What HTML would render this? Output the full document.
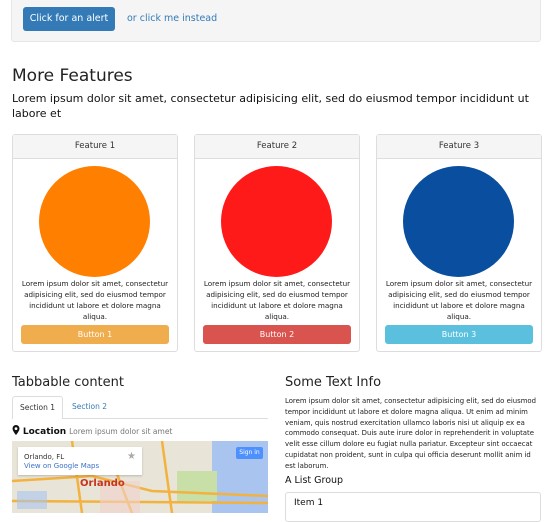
<!DOCTYPE html>
<html><head><style>
*{box-sizing:border-box;margin:0;padding:0}
body{width:556px;height:513px;overflow:hidden;background:#fff;font-family:"DejaVu Sans","Liberation Sans",sans-serif;color:#333;position:relative}
.a{position:absolute}
.jum{left:11px;top:-2px;width:530px;height:44px;background:#f5f5f5;border:1px solid #e6e6e6;border-radius:3px}
.btn{left:23px;top:7px;width:92px;height:24px;background:#337ab7;border-radius:3px;color:#fff;font-size:9.5px;text-align:center;line-height:24px}
.link{left:127px;top:7px;line-height:24px;font-size:9.5px;color:#337ab7}
h2{position:absolute;left:12px;top:66px;font-size:17px;font-weight:normal;color:#222}
.lead{left:12px;top:91px;width:530px;font-size:11px;line-height:15px;color:#111}
.panel{top:134px;width:166px;height:218px;border:1px solid #ddd;border-radius:3px}
.ph{height:24px;background:#f5f5f5;border-bottom:1px solid #ddd;font-size:8.5px;text-align:center;line-height:23px}
.circ{position:absolute;left:26px;top:31px;width:111px;height:111px;border-radius:50%}
.pt{position:absolute;left:6px;right:6px;top:143px;font-size:7.2px;line-height:11px;text-align:center;color:#222}
.pb{position:absolute;left:8px;right:8px;top:190px;height:19px;border-radius:3px;color:#fff;font-size:8px;text-align:center;line-height:19px}
h3{position:absolute;font-size:13px;font-weight:normal;color:#222}
</style></head><body>
<div class="a jum"></div>
<div class="a btn">Click for an alert</div>
<div class="a link">or click me instead</div>
<h2>More Features</h2>
<div class="a lead">Lorem ipsum dolor sit amet, consectetur adipisicing elit, sed do eiusmod tempor incididunt ut labore et</div>

<div class="a panel" style="left:12px"><div class="ph">Feature 1</div><div class="circ" style="background:#ff7f00"></div><div class="pt">Lorem ipsum dolor sit amet, consectetur adipisicing elit, sed do eiusmod tempor incididunt ut labore et dolore magna aliqua.</div><div class="pb" style="background:#f0ad4e">Button 1</div></div>
<div class="a panel" style="left:194px"><div class="ph">Feature 2</div><div class="circ" style="background:#ff1a1a"></div><div class="pt">Lorem ipsum dolor sit amet, consectetur adipisicing elit, sed do eiusmod tempor incididunt ut labore et dolore magna aliqua.</div><div class="pb" style="background:#d9534f">Button 2</div></div>
<div class="a panel" style="left:376px"><div class="ph">Feature 3</div><div class="circ" style="background:#0a4ea0"></div><div class="pt">Lorem ipsum dolor sit amet, consectetur adipisicing elit, sed do eiusmod tempor incididunt ut labore et dolore magna aliqua.</div><div class="pb" style="background:#5bc0de">Button 3</div></div>

<h3 style="left:12px;top:375px">Tabbable content</h3>
<div class="a" style="left:12px;top:418px;width:256px;border-top:1px solid #ddd"></div>
<div class="a" style="left:12px;top:396px;width:51px;height:23px;border:1px solid #ddd;border-bottom:none;background:#fff;border-radius:3px 3px 0 0;font-size:7.5px;text-align:center;line-height:22px">Section 1</div>
<div class="a" style="left:72px;top:396px;font-size:7.5px;line-height:22px;color:#337ab7">Section 2</div>
<div class="a" style="left:12px;top:425px;font-size:9px;line-height:13px;color:#111"><svg width="8" height="10" viewBox="0 0 8 10" style="vertical-align:-1px"><path d="M4 0a3.5 3.5 0 0 0-3.5 3.5C.5 6 4 10 4 10s3.5-4 3.5-6.5A3.5 3.5 0 0 0 4 0zm0 5a1.4 1.4 0 1 1 0-2.8A1.4 1.4 0 0 1 4 5z" fill="#111"/></svg> <b style="font-weight:bold">Location</b> <span style="font-size:7.5px;color:#777">Lorem ipsum dolor sit amet</span></div>
<div class="a" style="left:12px;top:441px;width:256px;height:72px;background:#e8e4d8;overflow:hidden">
<svg width="256" height="72"><rect x="200" y="0" width="56" height="72" fill="#a9c4ee"/><rect x="165" y="30" width="40" height="30" fill="#c8dfa8"/><path d="M0 40 L80 35 L140 50 L256 55 M60 0 L70 72 M150 0 L160 72 M0 60 L256 62 M100 20 L120 72" stroke="#f3b23e" stroke-width="2.5" fill="none"/><rect x="88" y="40" width="40" height="32" fill="#f1d2cc" opacity=".6"/><rect x="5" y="50" width="30" height="18" fill="#a9c4ee" opacity=".6"/></svg>
</div>
<div class="a" style="left:18px;top:447px;width:124px;height:28px;background:#fff;box-shadow:0 1px 2px rgba(0,0,0,.2);font-size:7px;padding:6px 6px;line-height:9px">Orlando, FL<br><span style="color:#3b73c8">View on Google Maps</span><span style="position:absolute;right:6px;top:5px;color:#aaa;font-size:10px">★</span></div>
<div class="a" style="left:236px;top:447px;width:27px;height:12px;background:#4d90fe;color:#fff;font-size:6px;text-align:center;line-height:12px;border-radius:2px">Sign in</div>
<div class="a" style="left:80px;top:478px;font-size:10px;font-weight:bold;color:#c5351b">Orlando</div>

<h3 style="left:285px;top:375px">Some Text Info</h3>
<div class="a" style="left:285px;top:396px;width:258px;font-size:6.9px;line-height:10.8px;color:#222">Lorem ipsum dolor sit amet, consectetur adipisicing elit, sed do eiusmod tempor incididunt ut labore et dolore magna aliqua. Ut enim ad minim veniam, quis nostrud exercitation ullamco laboris nisi ut aliquip ex ea commodo consequat. Duis aute irure dolor in reprehenderit in voluptate velit esse cillum dolore eu fugiat nulla pariatur. Excepteur sint occaecat cupidatat non proident, sunt in culpa qui officia deserunt mollit anim id est laborum.</div>
<div class="a" style="left:285px;top:475px;font-size:9.5px;color:#111">A List Group</div>
<div class="a" style="left:285px;top:492px;width:256px;height:30px;border:1px solid #ddd;border-radius:3px;font-size:9px;padding:5px 8px;color:#111">Item 1</div>
</body></html>
